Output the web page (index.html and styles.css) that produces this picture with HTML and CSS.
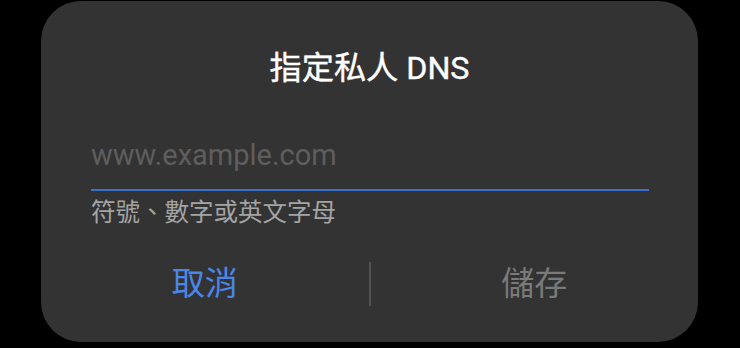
FILE: index.html
```html
<!DOCTYPE html>
<html lang="zh-Hant">
<head>
<meta charset="utf-8">
<link rel="stylesheet" href="styles.css">
</head>
<body>
<div class="dialog">
  <div class="title">指定私人 DNS</div>
  <div class="field">
    <div class="input">www.example.com</div>
    <div class="line"></div>
    <div class="helper">符號、數字或英文字母</div>
  </div>
  <div class="actions">
    <div class="btn cancel">取消</div>
    <div class="divider"></div>
    <div class="btn save">儲存</div>
  </div>
</div>
</body>
</html>
```
FILE: styles.css
```css
html, body {
  margin: 0;
  padding: 0;
  background: #000;
  width: 740px;
  height: 348px;
  overflow: hidden;
}
body {
  font-family: Roboto, "Noto Sans CJK TC", sans-serif;
}
.dialog {
  margin: 1px 0 0 41px;
  width: 657px;
  height: 341px;
  box-sizing: border-box;
  background: #333333;
  border-radius: 40px;
  padding-top: 47px;
  display: flex;
  flex-direction: column;
}
.title {
  text-align: center;
  color: #fff;
  font-size: 32.2px;
  font-weight: 400;
  line-height: 40px;
  -webkit-text-stroke: 0.4px #fff;
}
.field {
  margin: 49px 49px 0 50px;
}
.input {
  font-size: 29px;
  line-height: 36px;
  color: #5e5e5e;
  padding-bottom: 16px;
}
.line {
  height: 2px;
  background: #3d6fcf;
}
.helper {
  margin-top: 6px;
  font-size: 24.5px;
  line-height: 32px;
  color: #a4a4a4;
}
.actions {
  margin-top: 33px;
  display: flex;
  align-items: center;
  height: 44px;
}
.btn {
  flex: 1;
  text-align: center;
  font-size: 33px;
  line-height: 44px;
}
.cancel { color: #4a86e8; }
.save { color: #7a7a7a; }
.divider {
  width: 2px;
  height: 44px;
  background: #525252;
}
```
